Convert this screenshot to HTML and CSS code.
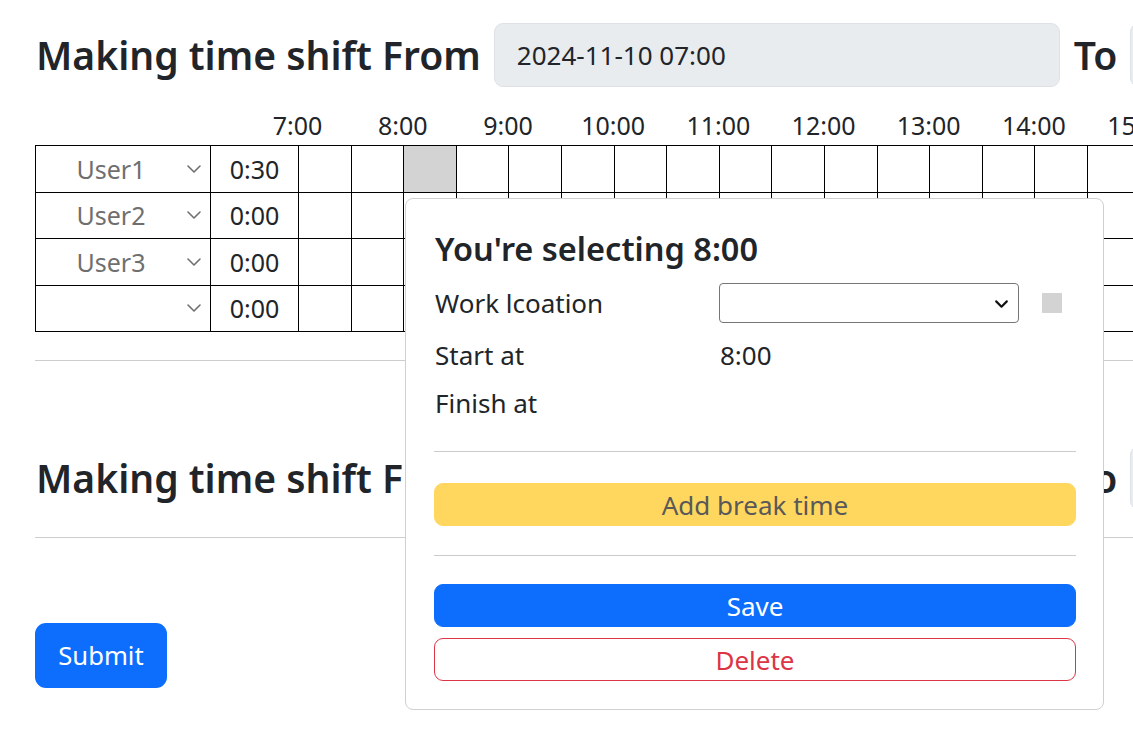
FILE: index.html
```html
<!DOCTYPE html>
<html lang="en">
<head>
<meta charset="utf-8">
<title>Making time shift</title>
<link rel="stylesheet" href="styles.css">
</head>
<body>
<div class="page">
  <section class="shift">
    <div class="shift-head">
      <h2 class="shift-title">Making time shift From</h2>
      <div class="date-input">2024-11-10 07:00</div>
      <h2 class="shift-title">To</h2>
      <div class="date-input"></div>
    </div>
    <div class="hours">
      <span class="hour">7:00</span><span class="hour">8:00</span><span class="hour">9:00</span><span class="hour">10:00</span><span class="hour">11:00</span><span class="hour">12:00</span><span class="hour">13:00</span><span class="hour">14:00</span><span class="hour">15:00</span>
    </div>
    <table class="grid">
      <colgroup>
        <col class="c-user"><col class="c-time">
        <col class="c-slot"><col class="c-slot"><col class="c-slot"><col class="c-slot"><col class="c-slot"><col class="c-slot"><col class="c-slot"><col class="c-slot"><col class="c-slot"><col class="c-slot"><col class="c-slot"><col class="c-slot"><col class="c-slot"><col class="c-slot"><col class="c-slot"><col class="c-slot"><col class="c-slot"><col class="c-slot">
      </colgroup>
      <tbody>
        <tr>
          <td class="user"><div class="user-pick"><span class="user-name">User1</span><svg class="chev" viewBox="0 0 16 16"><path d="M2 5l6 6 6-6" fill="none" stroke="currentColor" stroke-width="1.6" stroke-linecap="round" stroke-linejoin="round"/></svg></div></td>
          <td class="total">0:30</td>
          <td></td><td></td><td class="picked"></td><td></td><td></td><td></td><td></td><td></td><td></td><td></td><td></td><td></td><td></td><td></td><td></td><td></td><td></td><td></td>
        </tr>
        <tr>
          <td class="user"><div class="user-pick"><span class="user-name">User2</span><svg class="chev" viewBox="0 0 16 16"><path d="M2 5l6 6 6-6" fill="none" stroke="currentColor" stroke-width="1.6" stroke-linecap="round" stroke-linejoin="round"/></svg></div></td>
          <td class="total">0:00</td>
          <td></td><td></td><td></td><td></td><td></td><td></td><td></td><td></td><td></td><td></td><td></td><td></td><td></td><td></td><td></td><td></td><td></td><td></td>
        </tr>
        <tr>
          <td class="user"><div class="user-pick"><span class="user-name">User3</span><svg class="chev" viewBox="0 0 16 16"><path d="M2 5l6 6 6-6" fill="none" stroke="currentColor" stroke-width="1.6" stroke-linecap="round" stroke-linejoin="round"/></svg></div></td>
          <td class="total">0:00</td>
          <td></td><td></td><td></td><td></td><td></td><td></td><td></td><td></td><td></td><td></td><td></td><td></td><td></td><td></td><td></td><td></td><td></td><td></td>
        </tr>
        <tr>
          <td class="user"><div class="user-pick"><span class="user-name"></span><svg class="chev" viewBox="0 0 16 16"><path d="M2 5l6 6 6-6" fill="none" stroke="currentColor" stroke-width="1.6" stroke-linecap="round" stroke-linejoin="round"/></svg></div></td>
          <td class="total">0:00</td>
          <td></td><td></td><td></td><td></td><td></td><td></td><td></td><td></td><td></td><td></td><td></td><td></td><td></td><td></td><td></td><td></td><td></td><td></td>
        </tr>
      </tbody>
    </table>
    <hr class="rule rule-first">
  </section>

  <section class="shift shift-second">
    <div class="shift-head">
      <h2 class="shift-title">Making time shift From</h2>
      <div class="date-input">2024-11-11 07:00</div>
      <h2 class="shift-title">To</h2>
      <div class="date-input"></div>
    </div>
    <hr class="rule rule-second">
  </section>

  <button class="submit-btn" type="button">Submit</button>

  <div class="popover">
    <h3 class="pop-title">You're selecting 8:00</h3>
    <div class="pop-row pop-row-loc">
      <span class="pop-label">Work lcoation</span>
      <div class="loc-select"><svg class="loc-chev" viewBox="0 0 16 16"><path d="M3 6l5 5 5-5" fill="none" stroke="currentColor" stroke-width="2" stroke-linecap="round" stroke-linejoin="round"/></svg></div>
      <span class="swatch"></span>
    </div>
    <div class="pop-row">
      <span class="pop-label">Start at</span>
      <span class="pop-value">8:00</span>
    </div>
    <div class="pop-row">
      <span class="pop-label">Finish at</span>
      <span class="pop-value"></span>
    </div>
    <hr class="pop-rule pop-rule-a">
    <button class="pop-btn btn-break" type="button">Add break time</button>
    <hr class="pop-rule pop-rule-b">
    <button class="pop-btn btn-save" type="button">Save</button>
    <button class="pop-btn btn-delete" type="button">Delete</button>
  </div>
</div>
</body>
</html>
```

FILE: styles.css
```css
html, body {
  margin: 0;
  padding: 0;
  overflow: hidden;
}

body {
  font-family: "Noto Sans", "Open Sans", sans-serif;
  color: #212529;
  background: #fff;
}

.page {
  position: relative;
  padding: 23px 0 0 35px;
  width: 1098px;
  height: 711px;
}

.shift-head {
  display: flex;
  align-items: center;
  gap: 13px;
  height: 64px;
  white-space: nowrap;
  width: 1500px;
}

.shift-title {
  margin: 0 0 0 1px;
  font-size: 39.1px;
  font-weight: 600;
  line-height: 1.2;
}

.date-input {
  flex: 0 0 auto;
  box-sizing: border-box;
  width: 566px;
  height: 64px;
  display: flex;
  align-items: center;
  padding: 0 22px;
  background: #e9ecef;
  border: 1px solid #dee2e6;
  border-radius: 9px;
  font-size: 26px;
}

.hours {
  display: flex;
  align-items: flex-start;
  padding: 20px 0 0 210px;
  height: 38px;
  width: 1200px;
}

.hour {
  flex: 0 0 105.2px;
  text-align: center;
  font-size: 25px;
  line-height: 36px;
}

.grid {
  border-collapse: collapse;
  table-layout: fixed;
  width: 1210px;
  font-size: 25px;
}

.c-user { width: 175px; }
.c-time { width: 88px; }
.c-slot { width: 52.6px; }

.grid td {
  border: 1px solid #000;
  height: 45.5px;
  padding: 0;
  text-align: center;
}

.grid td.picked {
  background: #d3d3d3;
}

.user-pick {
  display: flex;
  align-items: center;
  height: 100%;
  color: #6f6f6f;
}

.user-name {
  flex: 1 1 auto;
  text-align: center;
  padding-left: 4px;
}

.chev {
  width: 16px;
  height: 16px;
  margin: 0 8px 0 4px;
  color: #6f6f6f;
}

.total {
  color: #212529;
}

.rule {
  border: 0;
  border-top: 1px solid #cdcdcd;
  margin: 0;
  width: 1098px;
}

.rule-first {
  margin-top: 28px;
}

.shift-second {
  padding-top: 85px;
}

.rule-second {
  margin-top: 27px;
}

.submit-btn {
  margin-top: 85px;
  box-sizing: border-box;
  width: 132px;
  height: 65px;
  border: 0;
  border-radius: 11px;
  background: #0d6efd;
  color: #fff;
  font-family: inherit;
  font-size: 25.6px;
  padding: 0;
}

.popover {
  position: absolute;
  left: 405px;
  top: 198px;
  box-sizing: border-box;
  width: 699px;
  height: 512px;
  padding: 31px 28px 0 28px;
  background: #fff;
  border: 1px solid #d0d0d0;
  border-radius: 8px;
}

.pop-title {
  margin: 0 0 0 1px;
  font-size: 32.5px;
  font-weight: 600;
  line-height: 38px;
}

.pop-row {
  display: flex;
  align-items: center;
  height: 48px;
  font-size: 26px;
  padding-left: 1px;
}

.pop-row-loc {
  margin-top: 15px;
  height: 40px;
  margin-bottom: 8px;
}

.pop-label {
  flex: 0 0 284px;
}

.pop-value {
  padding-left: 1px;
}

.loc-select {
  box-sizing: border-box;
  width: 300px;
  height: 40px;
  border: 1px solid #767676;
  border-radius: 4px;
  display: flex;
  align-items: center;
  justify-content: flex-end;
  padding-right: 8px;
}

.loc-chev {
  width: 17px;
  height: 17px;
  color: #111;
}

.swatch {
  width: 20px;
  height: 20px;
  margin-left: 23px;
  background: #d3d3d3;
}

.pop-rule {
  border: 0;
  border-top: 1px solid #cbcbcb;
  margin: 0;
  width: 642px;
}

.pop-rule-a { margin-top: 24px; }
.pop-rule-b { margin-top: 29px; }

.pop-btn {
  display: block;
  box-sizing: border-box;
  width: 642px;
  height: 43px;
  padding: 0;
  border-radius: 9px;
  font-family: inherit;
  font-size: 26px;
}

.btn-break {
  margin-top: 31px;
  background: #ffd75e;
  border: 1px solid #ffd75e;
  color: #595959;
}

.btn-save {
  margin-top: 28px;
  background: #0d6efd;
  border: 1px solid #0d6efd;
  color: #fff;
}

.btn-delete {
  margin-top: 11px;
  background: #fff;
  border: 1px solid #dc3545;
  color: #dc3545;
}
```
